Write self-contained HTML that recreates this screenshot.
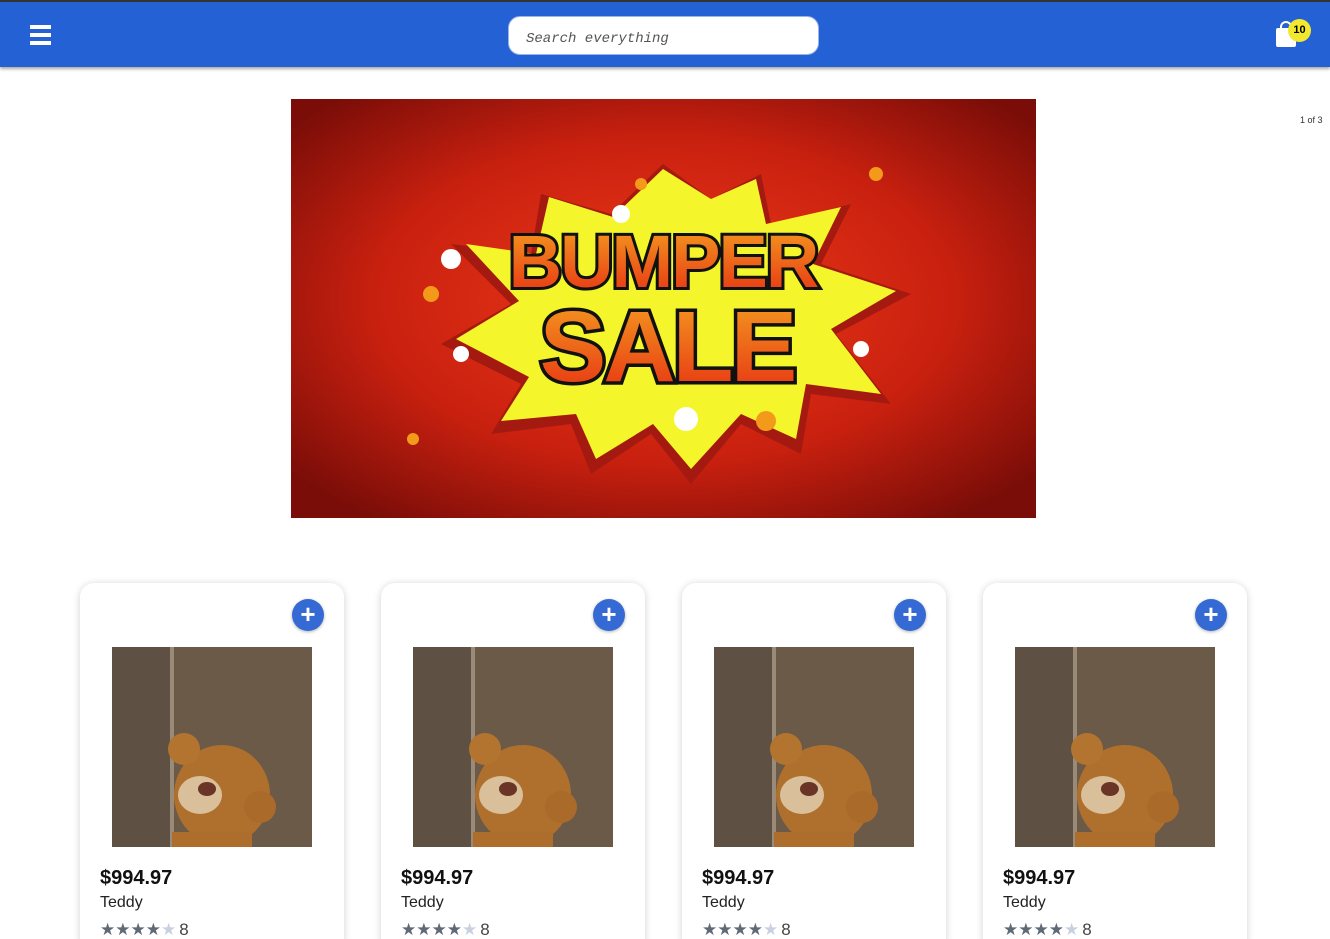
<!DOCTYPE html>
<html><head><meta charset="utf-8"><style>
*{margin:0;padding:0;box-sizing:border-box}
html{width:1330px;height:939px;overflow:hidden}
body{width:1330px;height:939px;overflow:hidden;background:#fff;font-family:"Liberation Sans",sans-serif;position:relative}
.hdr{position:absolute;left:0;top:0;width:1330px;height:67px;background:#2361d4;border-top:2px solid #333;box-shadow:0 2px 3px rgba(0,0,0,.35)}
.burger{position:absolute;left:30px;top:23px;width:21px}
.burger i{display:block;height:4px;background:#fff;margin-bottom:4px}
.search{position:absolute;left:508px;top:14px;width:311px;height:39px;background:#fff;border-radius:12px;border:1px solid #9bb5e8;font-family:"Liberation Mono",monospace;font-style:italic;font-size:14px;color:#555;padding:14px 0 0 17px}
.bag{position:absolute;left:1276px;top:26px;width:20px;height:19px;background:#fff;border-radius:2px}
.handle{position:absolute;left:1280px;top:19px;width:12px;height:12px;border:2px solid #fff;border-radius:6px 6px 0 0;border-bottom:none}
.badge{position:absolute;left:1288px;top:17px;width:23px;height:23px;border-radius:50%;background:#f2e92e;font-size:11px;font-weight:bold;text-align:center;line-height:23px;color:#000}
.pg{position:absolute;left:1300px;top:115px;font-size:9px;color:#333}
.banner{position:absolute;left:291px;top:99px;width:745px;height:419px;overflow:hidden}
.card{position:absolute;top:583px;width:264px;height:370px;background:#fff;border-radius:14px;box-shadow:0 1px 8px rgba(0,0,0,.18)}
.plus{position:absolute;left:212px;top:16px;width:32px;height:32px;border-radius:50%;background:#3569d4;color:#fff;font-size:26px;line-height:30px;text-align:center;font-weight:bold;box-shadow:0 1px 3px rgba(0,0,0,.3)}
.img{position:absolute;left:32px;top:64px;width:200px;height:200px;overflow:hidden}
.price{position:absolute;left:20px;top:284px;font-size:20px;font-weight:bold;color:#111}
.name{position:absolute;left:20px;top:311px;font-size:16px;color:#222}
.stars{position:absolute;left:20px;top:337px;font-size:17px;color:#5f6a75;letter-spacing:0px}
.stars b{color:#c9d0e0;font-weight:normal}
.stars span{color:#444;margin-left:3px}
</style></head><body>
<div class="hdr">
<div class="burger"><i></i><i></i><i></i></div>
<div class="search">Search everything</div>
<div class="handle"></div><div class="bag"></div><div class="badge">10</div>
</div>
<div class="pg">1 of 3</div>
<div class="banner"><svg width="745" height="419" viewBox="0 0 745 419">
<defs><radialGradient id="r" cx="50%" cy="48%" r="65%"><stop offset="0" stop-color="#f03a1a"/><stop offset=".6" stop-color="#c8200f"/><stop offset="1" stop-color="#7a0d08"/></radialGradient>
<linearGradient id="t" x1="0" y1="0" x2="0" y2="1"><stop offset="0" stop-color="#f5a020"/><stop offset="1" stop-color="#e62d12"/></linearGradient></defs>
<rect width="745" height="419" fill="url(#r)"/>
<polygon fill="#a51a10" points="372,60 420,95 470,70 480,120 560,100 530,160 620,190 545,230 600,300 520,290 510,350 450,320 400,380 360,330 300,370 280,320 200,330 230,280 150,240 220,200 160,140 240,150 250,90 320,110" transform="translate(0,5)"/>
<polygon fill="#f4f52a" points="372,70 420,100 465,80 475,125 550,108 522,165 605,192 540,230 590,295 515,285 505,340 450,315 400,370 362,325 305,360 285,315 210,322 238,278 165,240 228,202 175,145 245,155 258,98 322,118"/>
<text x="372" y="188" text-anchor="middle" font-family="Liberation Sans" font-weight="bold" font-size="74" fill="url(#t)" stroke="#111" stroke-width="6" paint-order="stroke" letter-spacing="-2">BUMPER</text>
<text x="376" y="282" text-anchor="middle" font-family="Liberation Sans" font-weight="bold" font-size="100" fill="url(#t)" stroke="#111" stroke-width="7" paint-order="stroke" letter-spacing="-3">SALE</text>
<g fill="#fff"><circle cx="160" cy="160" r="10"/><circle cx="170" cy="255" r="8"/><circle cx="395" cy="320" r="12"/><circle cx="570" cy="250" r="8"/><circle cx="330" cy="115" r="9"/></g>
<g fill="#f39a1a"><circle cx="140" cy="195" r="8"/><circle cx="350" cy="85" r="6"/><circle cx="585" cy="75" r="7"/><circle cx="475" cy="322" r="10"/><circle cx="122" cy="340" r="6"/></g>
</svg></div>

<div class="card" style="left:80px"><div class="plus">+</div><div class="img"><svg width="200" height="200"><rect width="200" height="200" fill="#6b5a48"/><rect width="58" height="200" fill="#5e5042"/><rect x="58" width="4" height="200" fill="#9a8a78"/><ellipse cx="110" cy="148" rx="48" ry="50" fill="#b0702d"/><circle cx="72" cy="102" r="16" fill="#b3742f"/><circle cx="148" cy="160" r="16" fill="#a96a2a"/><ellipse cx="88" cy="148" rx="22" ry="19" fill="#d9bf9a"/><ellipse cx="95" cy="142" rx="9" ry="7" fill="#6a3526"/><rect x="60" y="185" width="80" height="15" fill="#ad6d2c"/></svg></div><div class="price">$994.97</div><div class="name">Teddy</div><div class="stars">★★★★<b>★</b><span>8</span></div></div>
<div class="card" style="left:381px"><div class="plus">+</div><div class="img"><svg width="200" height="200"><rect width="200" height="200" fill="#6b5a48"/><rect width="58" height="200" fill="#5e5042"/><rect x="58" width="4" height="200" fill="#9a8a78"/><ellipse cx="110" cy="148" rx="48" ry="50" fill="#b0702d"/><circle cx="72" cy="102" r="16" fill="#b3742f"/><circle cx="148" cy="160" r="16" fill="#a96a2a"/><ellipse cx="88" cy="148" rx="22" ry="19" fill="#d9bf9a"/><ellipse cx="95" cy="142" rx="9" ry="7" fill="#6a3526"/><rect x="60" y="185" width="80" height="15" fill="#ad6d2c"/></svg></div><div class="price">$994.97</div><div class="name">Teddy</div><div class="stars">★★★★<b>★</b><span>8</span></div></div>
<div class="card" style="left:682px"><div class="plus">+</div><div class="img"><svg width="200" height="200"><rect width="200" height="200" fill="#6b5a48"/><rect width="58" height="200" fill="#5e5042"/><rect x="58" width="4" height="200" fill="#9a8a78"/><ellipse cx="110" cy="148" rx="48" ry="50" fill="#b0702d"/><circle cx="72" cy="102" r="16" fill="#b3742f"/><circle cx="148" cy="160" r="16" fill="#a96a2a"/><ellipse cx="88" cy="148" rx="22" ry="19" fill="#d9bf9a"/><ellipse cx="95" cy="142" rx="9" ry="7" fill="#6a3526"/><rect x="60" y="185" width="80" height="15" fill="#ad6d2c"/></svg></div><div class="price">$994.97</div><div class="name">Teddy</div><div class="stars">★★★★<b>★</b><span>8</span></div></div>
<div class="card" style="left:983px"><div class="plus">+</div><div class="img"><svg width="200" height="200"><rect width="200" height="200" fill="#6b5a48"/><rect width="58" height="200" fill="#5e5042"/><rect x="58" width="4" height="200" fill="#9a8a78"/><ellipse cx="110" cy="148" rx="48" ry="50" fill="#b0702d"/><circle cx="72" cy="102" r="16" fill="#b3742f"/><circle cx="148" cy="160" r="16" fill="#a96a2a"/><ellipse cx="88" cy="148" rx="22" ry="19" fill="#d9bf9a"/><ellipse cx="95" cy="142" rx="9" ry="7" fill="#6a3526"/><rect x="60" y="185" width="80" height="15" fill="#ad6d2c"/></svg></div><div class="price">$994.97</div><div class="name">Teddy</div><div class="stars">★★★★<b>★</b><span>8</span></div></div>
</body></html>
